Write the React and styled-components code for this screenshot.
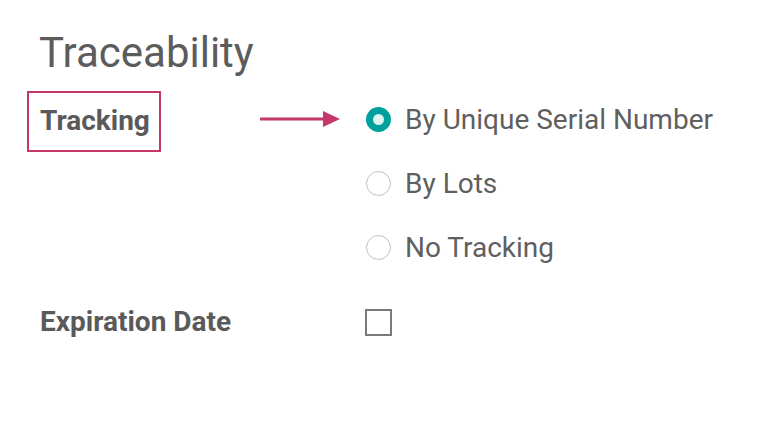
import React from "react";
import styled, { createGlobalStyle } from "styled-components";

const Global = createGlobalStyle`
  html, body {
    margin: 0;
    padding: 0;
    background: #ffffff;
    font-family: Roboto, "Liberation Sans", sans-serif;
  }
`;

const Page = styled.div`
  width: 768px;
  height: 430px;
  padding: 27px 0 0 27px;
  box-sizing: border-box;
  color: #5f5f5f;
  overflow: hidden;
`;

const Title = styled.h1`
  margin: 0 0 0 12px;
  font-weight: 400;
  font-size: 42px;
  line-height: 52px;
  color: #5c5c5c;
`;

const Grid = styled.div`
  display: grid;
  grid-template-columns: 340px 1fr;
  margin-top: 8px;
`;

const LabelCell = styled.div`
  display: flex;
  align-items: ${(p) => (p.$top ? "flex-start" : "center")};
  padding-top: ${(p) => (p.$top ? 4 : 0)}px;
  height: ${(p) => p.$h}px;
  box-sizing: border-box;
`;

const Label = styled.div`
  font-weight: 700;
  font-size: 28px;
  color: #5a5a5a;
  padding: 0 9px 2px 11px;
  height: 61px;
  line-height: 55px;
  box-sizing: border-box;
  border: 2px solid ${(p) => (p.$marked ? "#c4376b" : "transparent")};
`;

const Options = styled.div`
  display: flex;
  flex-direction: column;
`;

const Option = styled.label`
  display: flex;
  align-items: center;
  height: 64px;
  gap: 14px;
  font-size: 28px;
  color: #5f5f5f;
  position: relative;
`;

const Radio = styled.span`
  width: 25px;
  height: 25px;
  flex: none;
  margin-left: -1px;
  box-sizing: border-box;
  border-radius: 50%;
  border: ${(p) => (p.$checked ? "7px solid #00a09d" : "1.5px solid #c2c2c2")};
  background: ${(p) => (p.$checked ? "#dff3f2" : "#fff")};
`;

const Check = styled.span`
  width: 27px;
  height: 27px;
  margin-left: -2px;
  box-sizing: border-box;
  border: 2px solid #7a7a7a;
`;

const Arrow = styled.svg`
  position: absolute;
  left: -107px;
  top: 20px;
`;

const Row = styled.div`
  display: flex;
  align-items: center;
  height: ${(p) => p.$h}px;
`;

export default function App() {
  return (
    <Page>
      <Global />
      <Title>Traceability</Title>
      <Grid>
        <LabelCell $top $h={192}>
          <Label $marked>Tracking</Label>
        </LabelCell>
        <Options>
          <Option>
            <Arrow width="84" height="24" viewBox="0 0 84 24">
              <line x1="1" y1="12" x2="70" y2="12" stroke="#c4376b" strokeWidth="3" strokeLinecap="round" />
              <path d="M63 4 L80 12 L63 20 Z" fill="#c4376b" />
            </Arrow>
            <Radio $checked />
            By Unique Serial Number
          </Option>
          <Option>
            <Radio />
            By Lots
          </Option>
          <Option>
            <Radio />
            No Tracking
          </Option>
        </Options>
        <LabelCell $h={86}>
          <Label>Expiration Date</Label>
        </LabelCell>
        <Row $h={86}>
          <Check />
        </Row>
      </Grid>
    </Page>
  );
}
